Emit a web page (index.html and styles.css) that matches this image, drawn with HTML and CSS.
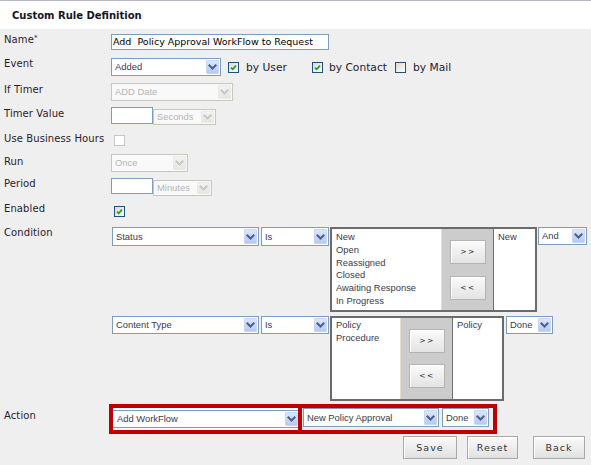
FILE: index.html
```html
<!DOCTYPE html>
<html>
<head>
<meta charset="utf-8">
<title>Custom Rule Definition</title>
<link rel="stylesheet" href="styles.css">
</head>
<body>
<div class="page">
  <div class="header"><span class="title">Custom Rule Definition</span></div>
  <div class="form">

    <div class="row r-name">
      <div class="lbl">Name<sup class="req">*</sup></div>
      <div class="ctl"><div class="inp w-name">Add&nbsp; Policy Approval WorkFlow to Request</div></div>
    </div>

    <div class="row r-event">
      <div class="lbl">Event</div>
      <div class="ctl ctl-center">
        <div class="sel w-event"><span class="sel-txt">Added</span><span class="sel-btn"><svg viewBox="0 0 11 12"><path d="M2.5 4.5 L5.5 7.5 L8.5 4.5"/></svg></span></div>
        <span class="cb cb-on cb-first"><svg viewBox="0 0 9 9"><path d="M2 4.6 L3.7 6.3 L7 2.6"/></svg></span>
        <span class="cbl">by User</span>
        <span class="cb cb-on cb-second"><svg viewBox="0 0 9 9"><path d="M2 4.6 L3.7 6.3 L7 2.6"/></svg></span>
        <span class="cbl">by Contact</span>
        <span class="cb cb-third"></span>
        <span class="cbl">by Mail</span>
      </div>
    </div>

    <div class="row r-iftimer">
      <div class="lbl lbl-p1">If Timer</div>
      <div class="ctl">
        <div class="sel dis w-iftimer"><span class="sel-txt">ADD Date</span><span class="sel-btn"><svg viewBox="0 0 11 12"><path d="M2.5 4.5 L5.5 7.5 L8.5 4.5"/></svg></span></div>
      </div>
    </div>

    <div class="row r-timerval">
      <div class="lbl lbl-p1">Timer Value</div>
      <div class="ctl">
        <div class="inp w-small tall"></div>
        <div class="sel dis small w-seconds"><span class="sel-txt">Seconds</span><span class="sel-btn"><svg viewBox="0 0 11 12"><path d="M2.5 4.5 L5.5 7.5 L8.5 4.5"/></svg></span></div>
      </div>
    </div>

    <div class="row r-bh">
      <div class="lbl lbl-up">Use Business Hours</div>
      <div class="ctl"><span class="cb cb-dis cb-solo"></span></div>
    </div>

    <div class="row r-run">
      <div class="lbl lbl-p2">Run</div>
      <div class="ctl">
        <div class="sel dis w-run"><span class="sel-txt">Once</span><span class="sel-btn"><svg viewBox="0 0 11 12"><path d="M2.5 4.5 L5.5 7.5 L8.5 4.5"/></svg></span></div>
      </div>
    </div>

    <div class="row r-period">
      <div class="lbl">Period</div>
      <div class="ctl">
        <div class="inp w-small"></div>
        <div class="sel dis small w-minutes"><span class="sel-txt">Minutes</span><span class="sel-btn"><svg viewBox="0 0 11 12"><path d="M2.5 4.5 L5.5 7.5 L8.5 4.5"/></svg></span></div>
      </div>
    </div>

    <div class="row r-enabled">
      <div class="lbl lbl-up2">Enabled</div>
      <div class="ctl"><span class="cb cb-on cb-solo"><svg viewBox="0 0 9 9"><path d="M2 4.6 L3.7 6.3 L7 2.6"/></svg></span></div>
    </div>

    <div class="row r-cond1">
      <div class="lbl">Condition</div>
      <div class="ctl ctl-cond">
        <div class="sel w-field tall19"><span class="sel-txt">Status</span><span class="sel-btn"><svg viewBox="0 0 11 12"><path d="M2.5 4.5 L5.5 7.5 L8.5 4.5"/></svg></span></div>
        <div class="sel w-op tall19"><span class="sel-txt">Is</span><span class="sel-btn"><svg viewBox="0 0 11 12"><path d="M2.5 4.5 L5.5 7.5 L8.5 4.5"/></svg></span></div>
        <div class="lgroup g1">
          <div class="list lst-left l1">New<br>Open<br>Reassigned<br>Closed<br>Awaiting Response<br>In Progress</div>
          <div class="mid mid1"><div class="mbtn">&gt;&gt;</div><div class="mbtn">&lt;&lt;</div></div>
          <div class="list lst-right">New</div>
        </div>
        <div class="sel w-and"><span class="sel-txt">And</span><span class="sel-btn"><svg viewBox="0 0 11 12"><path d="M2.5 4.5 L5.5 7.5 L8.5 4.5"/></svg></span></div>
      </div>
    </div>

    <div class="row r-cond2">
      <div class="lbl"></div>
      <div class="ctl ctl-cond">
        <div class="sel w-field"><span class="sel-txt">Content Type</span><span class="sel-btn"><svg viewBox="0 0 11 12"><path d="M2.5 4.5 L5.5 7.5 L8.5 4.5"/></svg></span></div>
        <div class="sel w-op"><span class="sel-txt">Is</span><span class="sel-btn"><svg viewBox="0 0 11 12"><path d="M2.5 4.5 L5.5 7.5 L8.5 4.5"/></svg></span></div>
        <div class="lgroup g2">
          <div class="list lst-left l2">Policy<br>Procedure</div>
          <div class="mid mid2"><div class="mbtn">&gt;&gt;</div><div class="mbtn">&lt;&lt;</div></div>
          <div class="list lst-right">Policy</div>
        </div>
        <div class="sel w-done done2"><span class="sel-txt">Done</span><span class="sel-btn"><svg viewBox="0 0 11 12"><path d="M2.5 4.5 L5.5 7.5 L8.5 4.5"/></svg></span></div>
      </div>
    </div>

    <div class="row r-action">
      <div class="lbl lbl-act">Action</div>
      <div class="ctl ctl-act">
        <div class="hl hl1">
          <div class="sel sel-clip"><span class="sel-txt">Add WorkFlow</span><span class="sel-btn"><svg viewBox="0 0 11 12"><path d="M2.5 4.5 L5.5 7.5 L8.5 4.5"/></svg></span></div>
        </div>
        <div class="hl hl2">
          <div class="sel tall19 w-wf"><span class="sel-txt">New Policy Approval</span><span class="sel-btn"><svg viewBox="0 0 11 12"><path d="M2.5 4.5 L5.5 7.5 L8.5 4.5"/></svg></span></div>
          <div class="sel tall19 w-done"><span class="sel-txt">Done</span><span class="sel-btn"><svg viewBox="0 0 11 12"><path d="M2.5 4.5 L5.5 7.5 L8.5 4.5"/></svg></span></div>
        </div>
      </div>
    </div>

    <div class="row r-buttons">
      <div class="btn btn-save">Save</div>
      <div class="btn btn-reset">Reset</div>
      <div class="btn btn-back">Back</div>
    </div>

  </div>
</div>
</body>
</html>
```

FILE: styles.css
```css
html, body {
  margin: 0;
  padding: 0;
  background: #efefef;
}
.page {
  width: 591px;
  height: 465px;
  overflow: hidden;
  background: #efefef;
  font-family: "DejaVu Sans", Verdana, sans-serif;
}
.header {
  height: 28px;
  border-top: 1px solid #b6b6c6;
  background: #ffffff;
  box-sizing: content-box;
  padding-left: 12px;
}
.title {
  display: block;
  padding-top: 8.5px;
  font-weight: bold;
  font-size: 10px;
  line-height: 12px;
  color: #15151f;
}
.form {
  padding-top: 5px;
}
.row {
  display: flex;
  align-items: flex-start;
}
.lbl {
  width: 111px;
  flex: none;
  box-sizing: border-box;
  padding-left: 4px;
  font-size: 10px;
  letter-spacing: 0.1px;
  line-height: 12px;
  color: #2b1b2b;
  white-space: nowrap;
}
.lbl-p1 { padding-top: 1px; }
.lbl-p2 { padding-top: 1.5px; }
.lbl-up { margin-top: -2px; }
.lbl-up2 { margin-top: -3px; }
.lbl-act { padding-top: 5.5px; }
.req {
  font-size: 7px;
  vertical-align: top;
  line-height: 8px;
}
.ctl {
  display: flex;
  align-items: flex-start;
}
.ctl-center { align-items: center; height: 18px; }

.r-name { height: 24px; }
.r-event { height: 25px; }
.r-iftimer { height: 24px; }
.r-timerval { height: 28px; }
.r-bh { height: 19px; }
.r-run { height: 24px; }
.r-period { height: 28px; }
.r-enabled { height: 21px; }
.r-cond1 { height: 89px; }
.r-cond2 { height: 88px; }
.r-action { height: 32px; }
.r-buttons { height: 29px; padding-left: 403px; }

/* text inputs */
.inp {
  box-sizing: border-box;
  height: 16px;
  border: 1px solid #7f9db9;
  background: #ffffff;
  padding-left: 1px;
  font-size: 9.5px;
  line-height: 14px;
  color: #000000;
  white-space: nowrap;
  overflow: hidden;
}
.inp.tall { height: 17px; }
.w-name { width: 218px; }
.w-small { width: 42px; }

/* selects */
.sel {
  box-sizing: border-box;
  height: 18px;
  display: flex;
  align-items: stretch;
  border: 1px solid #7f9db9;
  background: #ffffff;
  padding: 0 1px 0 3px;
  flex: none;
}
.sel.tall19 { height: 19px; }
.sel.small { height: 16px; margin-top: 2px; }
.sel-txt {
  flex: 1;
  font-family: "Liberation Sans", Arial, sans-serif;
  font-size: 9.4px;
  line-height: 16px;
  color: #3a3a4e;
  white-space: nowrap;
  overflow: hidden;
}
.tall19 .sel-txt { line-height: 17px; }
.small .sel-txt { line-height: 14px; }
.sel-btn {
  width: 13px;
  flex: none;
  margin: 1px 0;
  box-sizing: border-box;
  border: 1px solid #c7d5f7;
  border-radius: 1px;
  background: linear-gradient(#dce6fc, #b6c9f3);
  display: flex;
  align-items: center;
  justify-content: center;
}
.sel-btn svg {
  width: 11px;
  height: 12px;
  display: block;
}
.sel-btn path {
  fill: none;
  stroke: #4d6185;
  stroke-width: 2.1;
  stroke-linecap: square;
}
.sel.dis {
  border-color: #c9c7ba;
  background: #f9f9f9;
}
.dis .sel-txt { color: #b5b5b5; }
.dis .sel-btn {
  border-color: #e9e9e6;
  background: linear-gradient(#f2f2f0, #e6e6e3);
}
.dis .sel-btn path { stroke: #c9c9c9; }

.w-event { width: 110px; }
.w-iftimer { width: 122px; }
.w-seconds { width: 63px; }
.w-run { width: 77px; }
.w-minutes { width: 59px; }
.w-field { width: 147px; }
.w-op { width: 68px; margin-left: 2px; }
.w-and { width: 49px; margin-left: 1px; }
.w-done { width: 47px; }
.done2 { margin-left: 2px; height: 18px; }
.w-wf { width: 136px; }

/* checkboxes */
.cb {
  width: 11px;
  height: 11px;
  flex: none;
  box-sizing: border-box;
  border: 1px solid #1c5180;
  background: linear-gradient(135deg, #dcdcd6, #fbfbf8);
  display: block;
}
.cb svg { width: 9px; height: 9px; display: block; }
.cb path {
  fill: none;
  stroke: #21a121;
  stroke-width: 1.7;
}
.cb-dis {
  border-color: #c6c6c6;
  background: #ffffff;
}
.cb-first { margin-left: 7px; }
.cb-second { margin-left: 25px; }
.cb-third { margin-left: 8px; }
.cb-solo { margin-left: 3px; }
.cbl {
  font-size: 10.7px;
  line-height: 13px;
  color: #1d1d33;
  margin-left: 7px;
  padding-top: 1px;
  white-space: nowrap;
}
.cb-second + .cbl { margin-left: 6px; }

/* condition */
.ctl-cond { margin-left: 1px; }
.lgroup {
  display: flex;
  box-sizing: border-box;
  height: 85px;
  border: 2px solid #6b6b6b;
  background: #ffffff;
  margin-left: 1px;
  flex: none;
}
.g1 { width: 207px; }
.g2 { width: 174px; }
.list {
  box-sizing: border-box;
  padding: 2px 3px 0 4px;
  font-family: "Liberation Sans", Arial, sans-serif;
  font-size: 9.4px;
  line-height: 12.8px;
  color: #3a3a4e;
  background: #ffffff;
  white-space: nowrap;
}
.lst-left { border-right: 1px solid #e2ddcc; }
.l1 { width: 110px; }
.l2 { width: 69px; padding-top: 1px; }
.lst-right {
  flex: 1;
  border-left: 1px solid #6f6f6f;
}
.g2 .lst-right { padding-top: 1px; }
.mid {
  width: 51px;
  flex: none;
  box-sizing: border-box;
  background: #cccccc;
  display: flex;
  flex-direction: column;
  align-items: center;
  padding-top: 11px;
}
.mid1 { gap: 12px; }
.mid2 { gap: 11px; }
.mbtn {
  box-sizing: border-box;
  width: 36px;
  height: 24px;
  border: 1px solid #b3b3b3;
  box-shadow: inset 1px 1px 0 #ffffff;
  background: linear-gradient(#fbfbfb, #e3e3e3);
  font-size: 7.5px;
  letter-spacing: 1.5px;
  line-height: 22px;
  text-align: center;
  color: #333333;
  padding-left: 1px;
}

/* action */
.hl {
  box-sizing: border-box;
  height: 30px;
  border: 4px solid #c00000;
  flex: none;
}
.ctl-act { margin-left: -2px; }
.hl1 {
  width: 193px;
  background: #ffffff;
  padding-top: 2px;
}
.sel-clip {
  width: 100%;
  border-left: none;
  border-right: none;
  padding-left: 4px;
  padding-right: 0;
}
.hl2 {
  width: 199px;
  margin-left: -4px;
  display: flex;
  align-items: flex-start;
  padding-left: 1px;
  position: relative;
}
.hl2 .w-done { margin-left: 3px; }

/* buttons */
.btn {
  box-sizing: border-box;
  height: 23px;
  border: 1px solid #a9a9a9;
  box-shadow: inset 1px 1px 0 #ffffff;
  background: linear-gradient(#fafafa, #e1e1e1);
  font-size: 9.5px;
  letter-spacing: 1px;
  line-height: 21px;
  text-align: center;
  color: #333333;
  flex: none;
}
.btn-save { width: 54px; }
.btn-reset { width: 51px; margin-left: 10px; }
.btn-back { width: 52px; margin-left: 15px; }
```
